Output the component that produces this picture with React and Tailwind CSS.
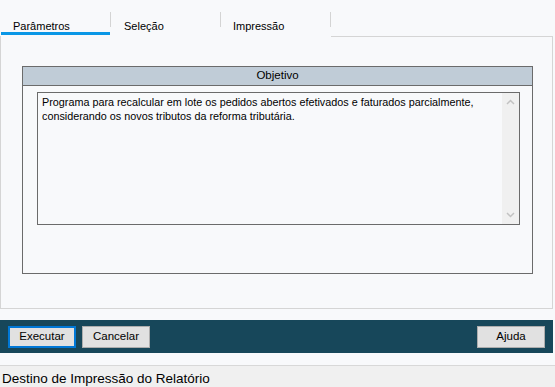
import React from "react";

const ui = { fontFamily: '"Liberation Sans", Arial, sans-serif' };

export default function App() {
  return (
    <div className="w-[555px] h-[387px] bg-[#f8f9fb] flex flex-col overflow-hidden" style={ui}>
      {/* Tabs */}
      <div className="h-[36px] flex items-end relative">
        <div className="w-[110px] h-[36px] relative flex">
          <span className="absolute left-[13px] top-[19px] text-[11px] leading-[14px] text-black whitespace-nowrap">Parâmetros</span>
          <div className="absolute left-[1px] right-0 top-[32px] h-[3px] bg-[#0a97e6]" />
        </div>
        <div className="w-[1px] h-[15px] bg-[#d4d4d4] self-start mt-[12px]" />
        <div className="w-[109px] h-[36px] relative">
          <span className="absolute left-[13px] top-[19px] text-[11px] leading-[14px] text-black whitespace-nowrap">Seleção</span>
        </div>
        <div className="w-[1px] h-[15px] bg-[#d4d4d4] self-start mt-[12px]" />
        <div className="w-[109px] h-[36px] relative">
          <span className="absolute left-[12px] top-[19px] text-[11px] leading-[14px] text-black whitespace-nowrap">Impressão</span>
        </div>
        <div className="w-[1px] h-[15px] bg-[#d4d4d4] self-start mt-[12px]" />
      </div>

      {/* Panel */}
      <div className="w-[553px] h-[273px] border-l border-r border-b border-[#d5d5d5] relative pt-[30px] pl-[21px]">
        <div className="absolute left-[330px] right-[-1px] top-0 h-px bg-[#d5d5d5]" />
        <div className="w-[511px] h-[208px] border border-[#6b6b6b] flex flex-col">
          <div className="h-[19px] bg-[#c0ccd7] border-b border-[#6b6b6b] flex items-center justify-center text-[11.5px] text-black">
            Objetivo
          </div>
          <div className="pl-[14px] pt-[6px]">
            <div className="w-[483px] h-[133px] border border-[#6b6b6b] flex">
              <div className="flex-1 pl-[4px] pt-[2px] text-[10.8px] leading-[14px] text-black whitespace-nowrap">
                Programa para recalcular em lote os pedidos abertos efetivados e faturados parcialmente,
                <br />
                considerando os novos tributos da reforma tributária.
              </div>
              <div className="w-[17px] bg-[#f0f0f0] flex flex-col items-center justify-between py-[6px]">
                <svg width="9" height="6" viewBox="0 0 9 6"><path d="M1 5 L4.5 1.5 L8 5" stroke="#c2c2c2" strokeWidth="1.5" fill="none" /></svg>
                <svg width="9" height="6" viewBox="0 0 9 6"><path d="M1 1 L4.5 4.5 L8 1" stroke="#c2c2c2" strokeWidth="1.5" fill="none" /></svg>
              </div>
            </div>
          </div>
        </div>
      </div>

      <div className="h-[11px]" />

      {/* Button bar */}
      <div className="w-[553px] h-[33px] bg-[#17475a] flex items-center px-[8px]">
        <button className="w-[68px] h-[22px] bg-[#e1e1e1] border-2 border-[#0078d7] text-[11.5px] text-black flex items-center justify-center">Executar</button>
        <button className="ml-[6px] w-[68px] h-[22px] bg-[#e1e1e1] border border-[#adadad] text-[11.5px] text-black flex items-center justify-center">Cancelar</button>
        <div className="flex-1" />
        <button className="w-[68px] h-[22px] bg-[#e1e1e1] border border-[#adadad] text-[11.5px] text-black flex items-center justify-center">Ajuda</button>
      </div>

      <div className="h-[13px] border-b border-[#d8d8d8]" />

      {/* Footer */}
      <div className="flex-1 bg-[#f0f0f0] pl-[2px] pt-[5px] text-[13.5px] leading-[16px] text-black">
        Destino de Impressão do Relatório
      </div>
    </div>
  );
}
